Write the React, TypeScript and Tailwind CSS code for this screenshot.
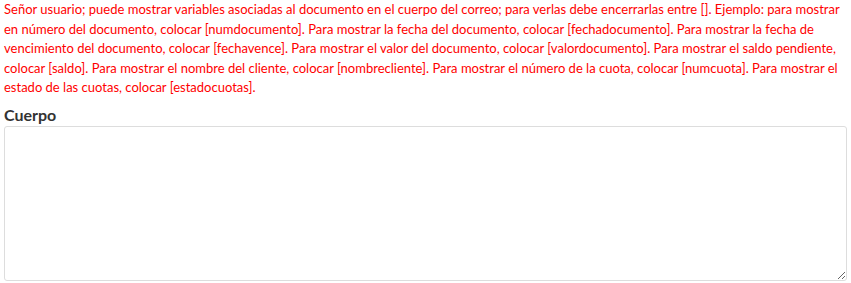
import React from 'react';

const App: React.FC = () => {
    return (
        <div className="px-[4px] font-['Lato','Liberation_Sans',sans-serif]">
            <p className="text-[13px] leading-[19.5px] text-[#ff0000]">
                Señor usuario; puede mostrar variables asociadas al documento en el cuerpo del correo; para verlas debe
                encerrarlas entre []. Ejemplo: para mostrar en número del documento, colocar [numdocumento]. Para mostrar la
                fecha del documento, colocar [fechadocumento]. Para mostrar la fecha de vencimiento del documento, colocar
                [fechavence]. Para mostrar el valor del documento, colocar [valordocumento]. Para mostrar el saldo pendiente,
                colocar [saldo]. Para mostrar el nombre del cliente, colocar [nombrecliente]. Para mostrar el número de la
                cuota, colocar [numcuota]. Para mostrar el estado de las cuotas, colocar [estadocuotas].
            </p>
            <label htmlFor="cuerpo" className="mt-[7px] block text-[16px] font-bold leading-[20px] text-[#333333]">
                Cuerpo
            </label>
            <textarea
                id="cuerpo"
                className="mt-[1px] block h-[155px] w-full rounded-[3px] border border-[#dddddd] bg-white"
            />
        </div>
    );
};

export default App;
